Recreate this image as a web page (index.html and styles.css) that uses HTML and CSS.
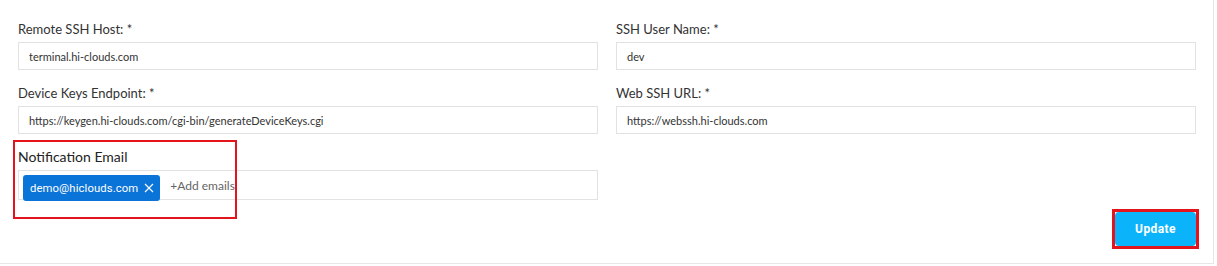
FILE: index.html
```html
<!DOCTYPE html>
<html lang="en">
<head>
    <meta charset="UTF-8">
    <title>SSH Settings</title>
    <meta name="viewport" content="width=device-width, initial-scale=1">
    <link rel="stylesheet" href="styles.css">
</head>
<body>
    <div class="settings-card">
        <div class="settings-grid">
            <div class="field">
                <label class="field-label">Remote SSH Host: *</label>
                <input class="field-input" type="text" value="terminal.hi-clouds.com">
            </div>
            <div class="field">
                <label class="field-label">SSH User Name: *</label>
                <input class="field-input" type="text" value="dev">
            </div>
            <div class="field">
                <label class="field-label">Device Keys Endpoint: *</label>
                <input class="field-input" type="text" value="https://keygen.hi-clouds.com/cgi-bin/generateDeviceKeys.cgi">
            </div>
            <div class="field">
                <label class="field-label">Web SSH URL: *</label>
                <input class="field-input" type="text" value="https://webssh.hi-clouds.com">
            </div>
            <div class="field email-field">
                <label class="field-label email-label">Notification Email</label>
                <div class="email-box">
                    <span class="email-chip">demo@hiclouds.com
                        <svg class="chip-x" width="10" height="10" viewBox="0 0 10 10"><path d="M1 1L9 9M9 1L1 9" stroke="#fff" stroke-width="1.1" fill="none"/></svg>
                    </span>
                    <span class="add-emails">+Add emails</span>
                </div>
                <div class="highlight-box"></div>
            </div>
        </div>
        <div class="actions">
            <span class="btn-highlight">
                <button type="button" class="update-btn">Update</button>
            </span>
        </div>
    </div>
</body>
</html>
```

FILE: styles.css
```css
body { margin: 0; background: #fff; font-family: Lato, 'Liberation Sans', Arial, sans-serif; }
.settings-card {
    width: 1181px;
    padding: 21px 14px 14px 18px;
    border: solid #e6e6e6;
    border-width: 0 1px 1px 0;
    background: #fff;
}
.settings-grid {
    display: grid;
    grid-template-columns: 580px 580px;
    column-gap: 18px;
    row-gap: 15px;
}
.field { display: flex; flex-direction: column; }
.field-label {
    font-size: 13px;
    line-height: 16px;
    color: #333;
    margin-bottom: 5px;
}
.field-input {
    box-sizing: border-box;
    height: 28px;
    border: 1px solid #e2e2e2;
    padding: 0 10px;
    font-family: Lato, 'Liberation Sans', Arial, sans-serif;
    font-size: 11px;
    color: #333;
    outline: none;
}
.email-field { position: relative; }
.email-label { font-size: 14px; color: #222; }
.email-box {
    box-sizing: border-box;
    height: 30px;
    border: 1px solid #e2e2e2;
    padding: 4px 4px 0 4px;
    display: flex;
    align-items: flex-start;
}
.email-chip {
    display: inline-flex;
    align-items: center;
    gap: 6px;
    height: 26px;
    padding: 0 6px 0 7px;
    background: #0b74d8;
    color: #fff;
    border-radius: 3px;
    font-family: Roboto, 'Liberation Sans', Arial, sans-serif;
    font-size: 11.3px;
    letter-spacing: 0.1px;
}
.add-emails {
    margin: 3px 0 0 10px;
    line-height: 16px;
    font-size: 12px;
    color: #666;
}
.highlight-box {
    position: absolute;
    left: -5px;
    top: -9px;
    width: 220px;
    height: 75px;
    border: 2px solid #e4141c;
}
.actions {
    display: flex;
    justify-content: flex-end;
    margin-top: 9px;
}
.btn-highlight {
    display: inline-flex;
    border: 3px solid #e4141c;
}
.update-btn {
    width: 81px;
    height: 34px;
    border: none;
    border-radius: 4px;
    background: #0bb4fa;
    color: #fff;
    font-family: Roboto, 'Liberation Sans', Arial, sans-serif;
    font-weight: 700;
    font-size: 12px;
    letter-spacing: 0.4px;
    cursor: pointer;
}
```
